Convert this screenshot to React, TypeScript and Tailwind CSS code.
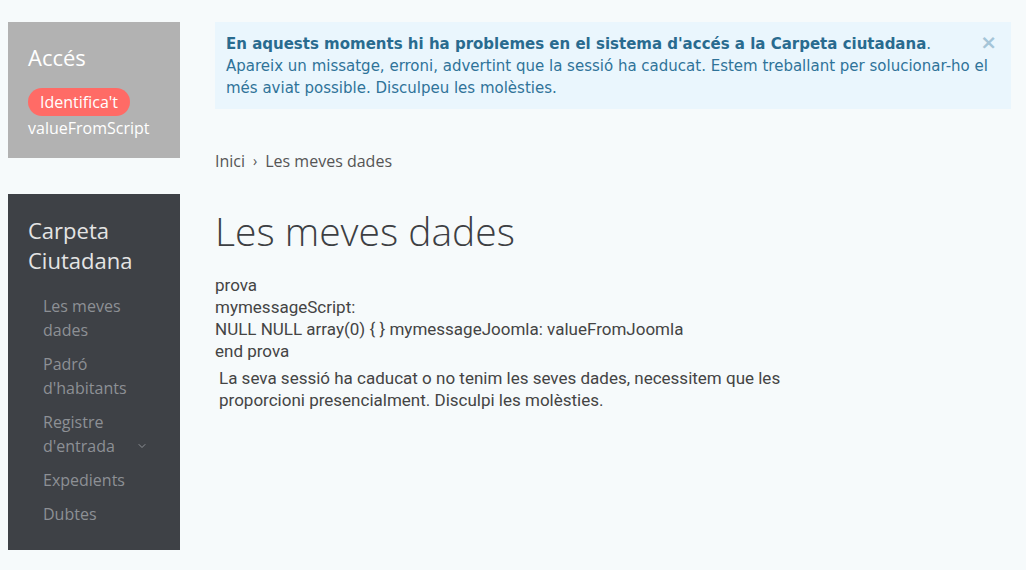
import { ChevronDown } from 'lucide-react';

const navItems = [
  { label: 'Les meves dades', wrap: ['Les meves', 'dades'] },
  { label: "Padró d'habitants", wrap: ['Padró', "d'habitants"] },
  { label: "Registre d'entrada", wrap: ['Registre', "d'entrada"], sub: true },
  { label: 'Expedients', wrap: ['Expedients'] },
  { label: 'Dubtes', wrap: ['Dubtes'] },
];

export default function App() {
  return (
    <div className="min-h-screen bg-[#f6fafb] flex gap-[35px] pl-2 pt-[22px] pr-4 font-['Open_Sans',sans-serif]">
      {/* Sidebar */}
      <aside className="w-[172px] shrink-0 flex flex-col gap-9">
        <div className="bg-[#b2b2b2] px-5 pt-[20px] pb-5 h-[136px]">
          <h2 className="text-[22px] leading-[30px] text-white">Accés</h2>
          <button className="mt-[16px] bg-[#ff6b66] text-white text-[16px] leading-[28px] px-[12px] rounded-full">
            Identifica't
          </button>
          <div className="text-white text-[16px] leading-[24px]">valueFromScript</div>
        </div>

        <nav className="bg-[#3e4146] px-5 pt-[21px] h-[356px]">
          <h2 className="text-[22px] leading-[30px] text-[#e4e4e4]">
            Carpeta
            <br />
            Ciutadana
          </h2>
          <ul className="mt-[19px] flex flex-col gap-[10px] pl-[15px]">
            {navItems.map((item) => (
              <li key={item.label} className="text-[16px] leading-[24px] text-[#8d9095] flex items-end">
                <a href="#" className="block">
                  {item.wrap.map((w, i) => (
                    <span key={i} className="block">
                      {w}
                    </span>
                  ))}
                </a>
                {item.sub && <ChevronDown className="ml-auto mb-[6px] mr-[12px] w-3 h-3 text-[#8d9095]" strokeWidth={2} />}
              </li>
            ))}
          </ul>
        </nav>
      </aside>

      {/* Main */}
      <main className="flex-1 min-w-0">
        <div className="relative bg-[#eaf6fd] text-[#2f7399] font-['DejaVu_Sans',sans-serif] text-[15px] leading-[22px] pl-[11px] pr-[14px] pt-[11px] pb-[10px] w-[796px]">
          <button className="absolute right-[14px] top-[9px] text-[#a5c5d8] text-[20px] font-bold leading-[22px]">×</button>
          <p>
            <strong className="font-bold text-[#296b8f]">En aquests moments hi ha problemes en el sistema d'accés a la Carpeta ciutadana</strong>.
            <br />
            Apareix un missatge, erroni, advertint que la sessió ha caducat. Estem treballant per solucionar-ho el més aviat possible. Disculpeu les molèsties.
          </p>
        </div>

        <div className="mt-[41px] text-[16px] leading-[22px] text-[#555] flex items-center gap-[8px]">
          <a href="#">Inici</a>
          <span className="text-[14px]">›</span>
          <span>Les meves dades</span>
        </div>

        <h1 className="mt-[35px] text-[39px] leading-[48px] text-[#3d3f43] font-light">Les meves dades</h1>

        <div className="mt-[19px] font-['Roboto',sans-serif] text-[17px] leading-[22px] text-[#444]">
          <div>prova</div>
          <div>mymessageScript:</div>
          <div>NULL NULL array(0) {'{'} {'}'} mymessageJoomla: valueFromJoomla</div>
          <div>end prova</div>
          <p className="mt-[5px] pl-1 w-[580px]">
            La seva sessió ha caducat o no tenim les seves dades, necessitem que les proporcioni presencialment. Disculpi les molèsties.
          </p>
        </div>
      </main>
    </div>
  );
}
